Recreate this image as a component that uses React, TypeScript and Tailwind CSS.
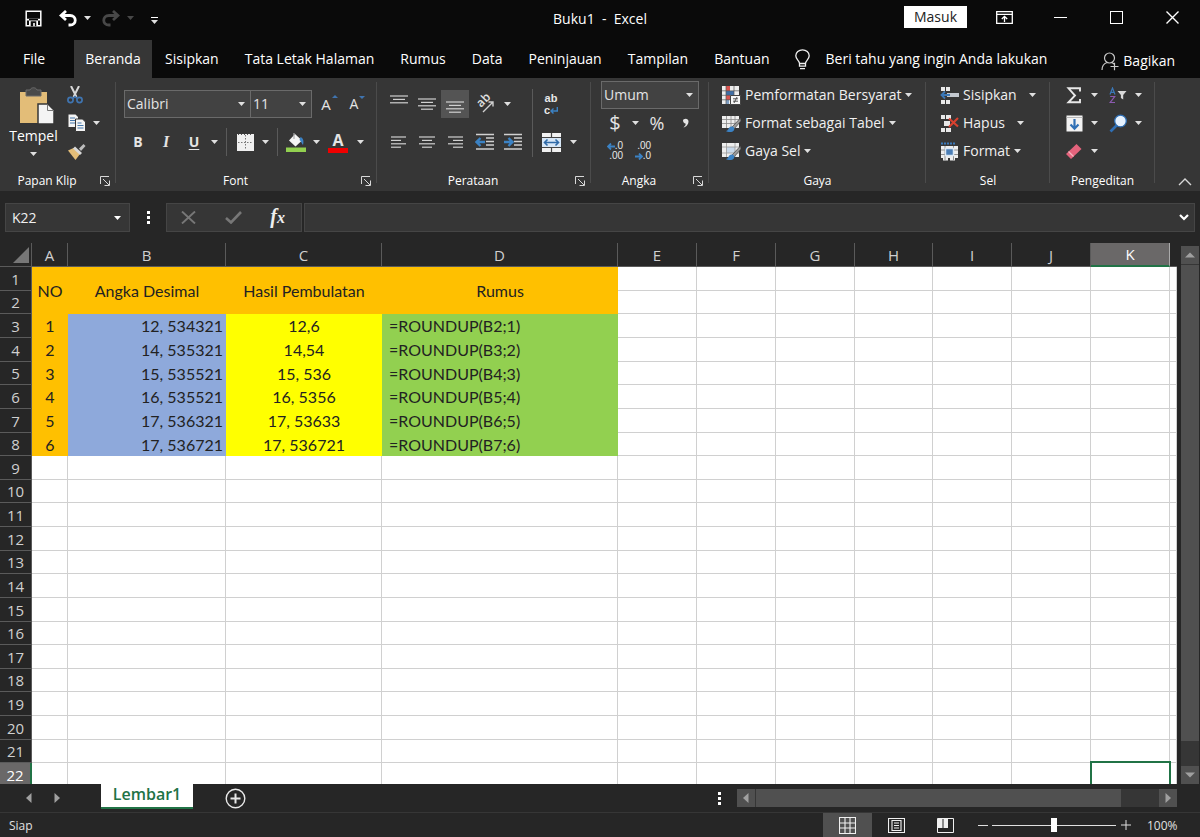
import { useState } from "react";
import type { ReactNode } from "react";

const TABS = ["Sisipkan", "Tata Letak Halaman", "Rumus", "Data", "Peninjauan", "Tampilan", "Bantuan"];

const COLUMNS = [
  { id: "A", width: "w-[36px]" },
  { id: "B", width: "w-[158px]" },
  { id: "C", width: "w-[156px]" },
  { id: "D", width: "w-[236px]" },
  { id: "E", width: "w-[79px]" },
  { id: "F", width: "w-[79px]" },
  { id: "G", width: "w-[79px]" },
  { id: "H", width: "w-[78px]" },
  { id: "I", width: "w-[79px]" },
  { id: "J", width: "w-[79px]" },
  { id: "K", width: "w-[79px]" },
];

const DATA = [
  ["1", "12, 534321", "12,6", "=ROUNDUP(B2;1)"],
  ["2", "14, 535321", "14,54", "=ROUNDUP(B3;2)"],
  ["3", "15, 535521", "15, 536", "=ROUNDUP(B4;3)"],
  ["4", "16, 535521", "16, 5356", "=ROUNDUP(B5;4)"],
  ["5", "17, 536321", "17, 53633", "=ROUNDUP(B6;5)"],
  ["6", "17, 536721", "17, 536721", "=ROUNDUP(B7;6)"],
];

const ROW_COUNT = 22;
const EMPTY_COLUMNS = ["E", "F", "G", "H", "I", "J", "K", ""];

/* ── Small shared pieces ── */

function Caret({ className = "text-[#e0e0e0]" }: { className?: string }) {
  return (
    <svg width="7" height="4" viewBox="0 0 7 4" className={`shrink-0 ${className}`} aria-hidden="true">
      <path d="M0 0h7L3.5 4z" fill="currentColor" />
    </svg>
  );
}

interface ToolProps {
  label: string;
  className?: string;
  children: ReactNode;
}

function Tool({ label, className = "w-7", children }: ToolProps) {
  return (
    <button type="button" aria-label={label} className={`flex h-7 shrink-0 items-center justify-center hover:bg-[#505050] ${className}`}>
      {children}
    </button>
  );
}

function Separator({ className = "" }: { className?: string }) {
  return <span className={`w-px shrink-0 bg-[#5a5a5a] ${className}`} />;
}

interface GroupProps {
  title: string;
  className: string;
  launcher?: boolean;
  children: ReactNode;
}

function Group({ title, className, launcher = false, children }: GroupProps) {
  return (
    <section className={`relative flex shrink-0 flex-col ${className}`}>
      <div className="h-[93px]">{children}</div>
      <div className="flex h-5 items-center">
        <h2 className="flex-1 text-center text-xs text-white">{title}</h2>
        {launcher && (
          <button type="button" aria-label={`Pengaturan ${title}`} className="flex w-[22px] justify-center">
            <svg width="10" height="10" viewBox="0 0 10 10" fill="none" stroke="#d8d8d8" aria-hidden="true">
              <path d="M.5 8V.5H9M3 3l6 6M9.5 4.5v5h-5" />
            </svg>
          </button>
        )}
      </div>
      <Separator className="absolute right-0 top-1 bottom-2 opacity-60" />
    </section>
  );
}

interface PickerProps {
  label: string;
  value: string;
  className: string;
}

function Picker({ label, value, className }: PickerProps) {
  return (
    <div className={`relative h-7 border border-[#6a6a6a] bg-[#424242] ${className}`}>
      <select aria-label={label} defaultValue={value} className="h-full w-full appearance-none pl-[2px] text-sm text-[#e4e4e4] outline-none">
        <option>{value}</option>
      </select>
      <span className="pointer-events-none absolute right-[5px] top-[11px]">
        <Caret />
      </span>
    </div>
  );
}

/* ── Alignment glyphs ── */

function Lines({ rows, y = 0 }: { rows: [number, number][]; y?: number }) {
  return (
    <svg width="20" height="20" viewBox="0 0 20 20" stroke="#d0d0d0" strokeWidth="1.2" aria-hidden="true">
      {rows.map(([from, to], i) => (
        <path key={i} d={`M${from} ${y + i * 3.4}H${to}`} />
      ))}
    </svg>
  );
}

function IndentIcon({ right = false }: { right?: boolean }) {
  return (
    <svg width="20" height="18" viewBox="0 0 20 18" fill="none" aria-hidden="true">
      <path d="M1 1.5h18M11 5h8M11 8.5h8M11 12h8M1 16h18" stroke="#d0d0d0" strokeWidth="1.3" />
      <path d={right ? "M1 9h8M5.5 5l4 4-4 4" : "M10 9H2M5.5 5l-4 4 4 4"} stroke="#3b82c4" strokeWidth="2.4" />
    </svg>
  );
}

/* ── Title bar ── */

function TitleBar() {
  return (
    <div className="flex h-10 items-start">
      <div className="flex h-9 flex-1 items-center">
        <button type="button" aria-label="Simpan" className="ml-[25px]">
          <svg width="17" height="17" viewBox="0 0 17 17" fill="none" aria-hidden="true">
            <path d="M1.2 1.2h14.6v14.6H1.2z" stroke="#fff" strokeWidth="1.5" />
            <path d="M1.5 8.8h14v1.6h-14zM4 9v7h9V9z" fill="#fff" />
            <path d="M5.7 11.3h5.6v5H9.8v-3.2H8.2v3.2H5.7z" fill="#0a0a0a" />
          </svg>
        </button>
        <button type="button" aria-label="Urungkan" className="ml-[17px] flex items-center gap-[7px]">
          <svg width="18" height="17" viewBox="0 0 18 17" fill="none" stroke="#fff" strokeWidth="2.8" aria-hidden="true">
            <path d="M7 1L2 5.5 7 10M2.5 5.5H11c7 0 7 9.5 0 9.5H9.5" />
          </svg>
          <Caret />
        </button>
        <button type="button" aria-label="Ulangi" className="ml-[11px] flex items-center gap-[7px]">
          <svg width="18" height="17" viewBox="0 0 18 17" fill="none" stroke="#484848" strokeWidth="2.8" aria-hidden="true">
            <path d="M11 1l5 4.5-5 4.5M15.5 5.5H7c-7 0-7 9.5 0 9.5h1.5" />
          </svg>
          <Caret className="text-[#484848]" />
        </button>
        <button type="button" aria-label="Kustomisasi Bilah Alat" className="ml-[17px] flex flex-col gap-[2px] pt-1">
          <span className="h-px w-[7px] bg-white" />
          <Caret />
        </button>
      </div>
      <h1 className="flex h-[37px] items-center whitespace-pre text-sm text-white">Buku1  -  Excel</h1>
      <div className="flex flex-1 justify-end">
        <button type="button" className="mt-[6px] mr-[9px] h-[22px] w-[63px] bg-white text-sm leading-[22px] text-[#222]">
          Masuk
        </button>
        <button type="button" aria-label="Opsi Tampilan Pita" className="flex h-[34px] w-14 items-center justify-center">
          <svg width="17" height="13" viewBox="0 0 17 13" fill="none" stroke="#fff" strokeWidth="1.3" aria-hidden="true">
            <path d="M.7.7h15.6v11.6H.7zM.7 3.3h15.6M8.5 11V5.5M5.8 8l2.7-2.7L11.2 8" />
          </svg>
        </button>
        <button type="button" aria-label="Minimalkan" className="flex h-[34px] w-14 items-center justify-center">
          <span className="h-px w-[13px] bg-white" />
        </button>
        <button type="button" aria-label="Maksimalkan" className="flex h-[34px] w-14 items-center justify-center">
          <span className="size-[13px] border border-white" />
        </button>
        <button type="button" aria-label="Tutup" className="flex h-[34px] w-14 items-center justify-center">
          <svg width="13" height="13" viewBox="0 0 13 13" stroke="#fff" strokeWidth="1.4" aria-hidden="true">
            <path d="M.5.5l12 12M12.5.5l-12 12" />
          </svg>
        </button>
      </div>
    </div>
  );
}

function TabBar() {
  return (
    <nav className="flex h-[38px] items-stretch text-sm text-white">
      <a href="#file" className="flex w-[74px] items-center pl-[23px]">File</a>
      <a href="#beranda" className="flex w-[78px] items-center justify-center bg-[#363636]">Beranda</a>
      {TABS.map((tab) => (
        <a key={tab} href={`#${tab}`} className="flex items-center px-[13px] whitespace-nowrap">
          {tab}
        </a>
      ))}
      <button type="button" className="ml-3 flex items-center gap-4 whitespace-nowrap">
        <svg width="15" height="21" viewBox="0 0 15 21" fill="none" stroke="#f0f0f0" strokeWidth="1.3" aria-hidden="true">
          <path d="M4.5 14.5c0-3-3.7-4-3.7-7.7a6.7 6 0 0 1 13.4 0c0 3.7-3.7 4.7-3.7 7.7zM4.5 14.5v2.7h6v-2.7M5 19.7h5" />
        </svg>
        Beri tahu yang ingin Anda lakukan
      </button>
      <button type="button" className="ml-auto mr-[25px] flex items-center gap-1 pt-1">
        <svg width="18" height="19" viewBox="0 0 18 19" fill="none" stroke="#c8c8c8" strokeWidth="1.2" aria-hidden="true">
          <circle cx="8.5" cy="6" r="5" />
          <path d="M1 18c0-4 2-6.500 5-7.500M11 10.500l2 1.500M9.500 14.500h8M13.500 10.800v7.500" />
        </svg>
        Bagikan
      </button>
    </nav>
  );
}

/* ── Ribbon groups ── */

function ClipboardGroup() {
  return (
    <Group title="Papan Klip" className="w-[116px]" launcher>
      <div className="flex pt-[3px]">
        <button type="button" className="flex w-[67px] flex-col items-center pt-[6px] text-sm text-white">
          <svg width="36" height="39" viewBox="0 0 36 39" className="ml-[6px]" aria-hidden="true">
            <path d="M1 5h27v31H1z" fill="#e3bd78" />
            <path d="M7 3h4c1-3 6-3 7 0h4v6H7z" fill="#4a4a4a" stroke="#6b6b6b" />
            <path d="M19 17h10l6 6v14H19z" fill="#f4f4f4" stroke="#363636" strokeWidth="1.5" />
            <path d="M28.5 17.5v6H35" fill="none" stroke="#777" />
          </svg>
          <span className="leading-5">Tempel</span>
          <span className="flex h-4 items-center"><Caret /></span>
        </button>
        <div className="flex flex-col">
          <Tool label="Potong" className="w-4">
            <svg width="16" height="18" viewBox="0 0 16 18" fill="none" aria-hidden="true">
              <path d="M4 0l5.500 11M12 0L6.500 11" stroke="#d8d8d8" strokeWidth="2" />
              <circle cx="3.5" cy="14" r="2.6" stroke="#3f74b0" strokeWidth="1.7" />
              <circle cx="12.5" cy="14" r="2.6" stroke="#3f74b0" strokeWidth="1.7" />
              <path d="M6 12.5l2-2 2 2" stroke="#3f74b0" strokeWidth="1.5" />
            </svg>
          </Tool>
          <div className="flex items-center gap-[6px]">
            <Tool label="Salin" className="w-5">
              <svg width="18" height="18" viewBox="0 0 18 18" aria-hidden="true">
                <path d="M.5.5h7L10 3v10H.5z" fill="#f4f4f4" />
                <path d="M2 4h5M2 6.500h6M2 9h6" stroke="#4377ad" />
                <path d="M7.500 5h7l3 3v9.500h-10z" fill="#f4f4f4" stroke="#363636" />
                <path d="M9.500 9h4M9.500 11.500h6M9.500 14h6" stroke="#4377ad" />
              </svg>
            </Tool>
            <Caret />
          </div>
          <Tool label="Pewarna Format" className="w-5">
            <svg width="18" height="17" viewBox="0 0 18 17" aria-hidden="true">
              <path d="M0 7.500l5.500-2.500 6.500 6-4.500 6z" fill="#e3bd78" />
              <path d="M7 3.500l7 6.500-2 2-7-6.500z" fill="#d8d8d8" />
              <path d="M11 5.500L15.500 1 17.500 3 13 8z" fill="#bdbdbd" />
            </svg>
          </Tool>
        </div>
      </div>
    </Group>
  );
}

function FontGroup() {
  return (
    <Group title="Font" className="w-[261px]" launcher>
      <div className="flex flex-col gap-[10px] pt-3 pl-2 text-[#e4e4e4]">
        <div className="flex">
          <Picker label="Font" value="Calibri" className="w-[127px]" />
          <Picker label="Ukuran Font" value="11" className="w-[61px] border-l-0" />
          <Tool label="Perbesar Ukuran Font" className="w-8">
            <span className="relative pr-1 text-[15px]">
              A
              <svg width="6" height="3" viewBox="0 0 6 3" className="absolute -right-[3px] top-[2px]" aria-hidden="true">
                <path d="M0 3l3-3 3 3z" fill="#3f74b0" />
              </svg>
            </span>
          </Tool>
          <Tool label="Perkecil Ukuran Font" className="w-6">
            <span className="relative pr-1 text-sm">
              A
              <svg width="6" height="3" viewBox="0 0 6 3" className="absolute -right-[3px] top-[2px]" aria-hidden="true">
                <path d="M0 0h6L3 3z" fill="#3f74b0" />
              </svg>
            </span>
          </Tool>
        </div>
        <div className="flex items-center">
          <Tool label="Tebal"><b className="text-sm">B</b></Tool>
          <Tool label="Miring"><b className="font-['Liberation_Serif',serif] text-base italic">I</b></Tool>
          <Tool label="Garis Bawah"><b className="text-sm underline underline-offset-2">U</b></Tool>
          <Tool label="Jenis Garis Bawah" className="w-3"><Caret /></Tool>
          <Separator className="ml-[6px] h-7" />
          <Tool label="Batas" className="ml-1 w-7">
            <svg width="17" height="17" viewBox="0 0 17 17" aria-hidden="true">
              <path d="M0 0h17v17H0z" fill="#f0f0f0" />
              <path d="M8.5 1v15M1 8.5h15" stroke="#777" strokeDasharray="1.5 1.5" />
              <path d="M1 .5h15" stroke="#555" strokeDasharray="1 2" />
            </svg>
          </Tool>
          <Tool label="Pilihan Batas" className="w-3"><Caret /></Tool>
          <Separator className="ml-[6px] h-7" />
          <Tool label="Warna Isian" className="ml-1 w-7">
            <svg width="20" height="20" viewBox="0 0 20 20" aria-hidden="true">
              <path d="M9 2l7 6.500-6.500 6L3 8.500z" fill="#f4f4f4" />
              <path d="M8 1v6" stroke="#aaa" strokeWidth="1.2" />
              <path d="M14.5 5c3 1 3.500 4.500 2.500 8-1-1-2-4-3.500-5z" fill="#3b82c4" />
              <path d="M0 15.5h20V20H0z" fill="#92d050" />
            </svg>
          </Tool>
          <Tool label="Pilihan Warna Isian" className="w-3"><Caret /></Tool>
          <Tool label="Warna Font" className="w-8">
            <span className="flex flex-col items-center">
              <b className="text-base leading-4">A</b>
              <span className="h-[5px] w-5 bg-[#f00000]" />
            </span>
          </Tool>
          <Tool label="Pilihan Warna Font" className="w-3"><Caret /></Tool>
        </div>
      </div>
    </Group>
  );
}

function AlignmentGroup() {
  return (
    <Group title="Perataan" className="w-[214px]" launcher>
      <div className="flex pl-2">
        <div className="flex w-[147px] flex-col gap-[10px] pt-3">
          <div className="flex items-center">
            <Tool label="Rata Atas"><Lines rows={[[1, 19], [4, 16], [1, 19]]} y={2} /></Tool>
            <Tool label="Rata Tengah"><Lines rows={[[1, 19], [4, 16], [1, 19], [4, 16]]} y={5} /></Tool>
            <Tool label="Rata Bawah" className="w-7 bg-[#545454]"><Lines rows={[[1, 19], [4, 16], [1, 19], [4, 16]]} y={8} /></Tool>
            <Tool label="Orientasi" className="w-8">
              <svg width="26" height="26" viewBox="0 0 26 26" aria-hidden="true">
                <text x="9" y="17" fontSize="12" fontWeight="600" fill="#e0e0e0" transform="rotate(-45 9 17)">ab</text>
                <path d="M11 21L21 11M21 15.500V11h-4.500" fill="none" stroke="#d0d0d0" strokeWidth="1.4" />
              </svg>
            </Tool>
            <Tool label="Pilihan Orientasi" className="w-3"><Caret /></Tool>
          </div>
          <div className="flex items-center">
            <Tool label="Rata Kiri"><Lines rows={[[2, 17], [2, 12], [2, 17], [2, 12]]} y={5} /></Tool>
            <Tool label="Tengah"><Lines rows={[[2, 18], [5, 15], [2, 18], [5, 15]]} y={5} /></Tool>
            <Tool label="Rata Kanan"><Lines rows={[[3, 18], [8, 18], [3, 18], [8, 18]]} y={5} /></Tool>
            <Tool label="Kurangi Inden" className="w-8"><IndentIcon /></Tool>
            <Tool label="Tambah Inden" className="w-6"><IndentIcon right /></Tool>
          </div>
        </div>
        <Separator className="mt-[11px] h-[68px]" />
        <div className="flex flex-col gap-[10px] pt-3 pl-1">
          <Tool label="Bungkus Teks" className="w-7">
            <span className="flex flex-col font-['Liberation_Sans',sans-serif] text-[11px] leading-3 font-bold text-[#e8e8e8]">
              ab
              <span className="flex items-center">
                c
                <svg width="8" height="7" viewBox="0 0 8 7" fill="none" stroke="#3b82c4" strokeWidth="1.4" aria-hidden="true">
                  <path d="M7.300 0v4H1M3.500 1.500L1 4l2.500 2.500" />
                </svg>
              </span>
            </span>
          </Tool>
          <div className="flex items-center">
            <Tool label="Gabungkan" className="w-7">
              <svg width="19" height="19" viewBox="0 0 19 19" aria-hidden="true">
                <path d="M0 0h19v19H0z" fill="#f2f2f2" />
                <path d="M0 4.500h19M0 14.500h19M9.500 0v4.500M9.500 14.500V19" stroke="#444" strokeWidth="1.2" />
                <path d="M0 5h19v9H0z" fill="#d7e7f7" />
                <path d="M2.500 9.500h14M5.500 6.500l-3 3 3 3M13.500 6.500l3 3-3 3" fill="none" stroke="#2f6aa8" strokeWidth="1.6" />
              </svg>
            </Tool>
            <Tool label="Pilihan Gabungkan" className="w-4"><Caret /></Tool>
          </div>
        </div>
      </div>
    </Group>
  );
}

function DecimalIcon({ decrease = false }: { decrease?: boolean }) {
  const arrow = (
    <svg width="8" height="7" viewBox="0 0 8 7" fill="none" stroke="#3b82c4" strokeWidth="1.8" aria-hidden="true">
      <path d={decrease ? "M0 3.500h7M4 .5l3 3-3 3" : "M8 3.500H1M4 .5l-3 3 3 3"} />
    </svg>
  );
  return (
    <span className="flex flex-col items-end font-['Liberation_Sans',sans-serif] text-[10px] leading-[10px] text-[#e8e8e8]">
      <span className="flex items-center">{decrease ? ".00" : <>{arrow}.0</>}</span>
      <span className="flex items-center">{decrease ? <>{arrow}.0</> : ".00"}</span>
    </span>
  );
}

function NumberGroup() {
  return (
    <Group title="Angka" className="w-[118px]" launcher>
      <div className="flex flex-col pt-[3px] pl-[10px] text-[#e4e4e4]">
        <Picker label="Format Angka" value="Umum" className="w-[98px]" />
        <div className="flex items-center">
          <Tool label="Format Akuntansi"><span className="text-xl">$</span></Tool>
          <Tool label="Pilihan Akuntansi" className="w-3"><Caret /></Tool>
          <Tool label="Gaya Persen" className="w-8"><span className="text-lg">%</span></Tool>
          <Tool label="Gaya Koma" className="w-6">
            <svg width="7" height="10" viewBox="0 0 7 10" aria-hidden="true">
              <path d="M1 2.500C1 .5 6.500-.5 6.500 3.500 6.500 6.500 4 9 1.500 9.500 3 8 4 7 3.500 5.500 2 5.500 1 4 1 2.500z" fill="#e4e4e4" />
            </svg>
          </Tool>
        </div>
        <div className="flex items-center">
          <Tool label="Tambah Desimal"><DecimalIcon /></Tool>
          <Tool label="Kurangi Desimal"><DecimalIcon decrease /></Tool>
        </div>
      </div>
    </Group>
  );
}

function TextTool({ icon, label, gap = "gap-1" }: { icon: ReactNode; label: string; gap?: string }) {
  return (
    <button type="button" className="flex h-7 items-center gap-1 whitespace-nowrap text-sm text-[#f0f0f0]">
      {icon}
      <span className={`flex items-center ${gap}`}>
        {label}
        <Caret />
      </span>
    </button>
  );
}

function StylesGroup() {
  return (
    <Group title="Gaya" className="w-[217px]">
      <div className="flex flex-col items-start pt-[3px] pl-[13px]">
        <TextTool
          label="Pemformatan Bersyarat"
          icon={
            <svg width="19" height="19" viewBox="0 0 19 19" aria-hidden="true">
              <path d="M0 0h17v18H0z" fill="#eee" />
              <path d="M4 0h4v5H4z" fill="#d9534f" />
              <path d="M4 5h8v4H4z" fill="#3f6ea5" />
              <path d="M4 9h4v5H4z" fill="#d9534f" />
              <path d="M4 14h3v4H4z" fill="#7f9fc4" />
              <path d="M0 4.800h17M0 9.300h9M0 13.800h9M4 0v18M12 0v9" stroke="#555" strokeWidth=".7" />
              <path d="M8.500 9.500h10v9h-10z" fill="#f6f6f6" stroke="#444" />
              <path d="M11 12.800h5M11 15.200h5M15 11l-3 6" stroke="#444" strokeWidth=".9" />
            </svg>
          }
        />
        <TextTool
          label="Format sebagai Tabel"
          icon={
            <svg width="19" height="19" viewBox="0 0 19 19" aria-hidden="true">
              <path d="M0 2h17v12H0z" fill="#eee" />
              <path d="M0 5.500h17M0 9.500h17M4.500 2v12M9 2v12M13 2v12" stroke="#888" strokeWidth=".8" />
              <path d="M18.500 4L10 13l2 2 7-8z" fill="#9a9a9a" stroke="#444" strokeWidth=".7" />
              <path d="M4 17c3 0 2-5 6-4.500 3.500.5 3 5-1 5.500-2 .2-4 0-5-1z" fill="#3b82c4" />
            </svg>
          }
        />
        <TextTool
          label="Gaya Sel"
          icon={
            <svg width="19" height="19" viewBox="0 0 19 19" aria-hidden="true">
              <path d="M0 1h17v14H0z" fill="#eee" />
              <path d="M4.500 5h8.500v6H4.500z" fill="#c9d9ea" />
              <path d="M0 5h17M0 11h17M4.500 1v14M13 1v14" stroke="#999" strokeWidth=".8" />
              <path d="M18.500 4L10 13l2 2 7-8z" fill="#9a9a9a" stroke="#444" strokeWidth=".7" />
              <path d="M4 17c3 0 2-5 6-4.500 3.500.5 3 5-1 5.500-2 .2-4 0-5-1z" fill="#3b82c4" />
            </svg>
          }
        />
      </div>
    </Group>
  );
}

function CellsGroup() {
  return (
    <Group title="Sel" className="w-[124px]">
      <div className="flex flex-col items-start pt-[3px] pl-[14px]">
        <TextTool
          label="Sisipkan"
          gap="gap-3"
          icon={
            <svg width="19" height="19" viewBox="0 0 19 19" aria-hidden="true">
              <path d="M1 1h4v4H1zM6 1h4v4H6zM1 14h4v4H1zM6 14h4v4H6z" fill="#e8e8e8" />
              <path d="M7 7h12v4H7z" fill="#c4c9d0" />
              <path d="M10 9H2M5 5.500L1.500 9 5 12.500" fill="none" stroke="#3b78b8" strokeWidth="1.8" />
            </svg>
          }
        />
        <TextTool
          label="Hapus"
          gap="gap-3"
          icon={
            <svg width="19" height="19" viewBox="0 0 19 19" aria-hidden="true">
              <path d="M1 1h4v4H1zM6 1h5v4H6zM1 14h4v4H1zM6 14h5v4H6zM4 7h6v5H4z" fill="#e8e8e8" />
              <path d="M9 4.500l9 8M18 4l-9 9" stroke="#d8412f" strokeWidth="2.2" />
            </svg>
          }
        />
        <TextTool
          label="Format"
          icon={
            <svg width="19" height="19" viewBox="0 0 19 19" aria-hidden="true">
              <path d="M1 1.500h15" stroke="#3b78b8" strokeWidth="2" strokeDasharray="2 1" />
              <path d="M1 4h17v12H1zM3 16h5v2.500H3zM10 16h5v2.500h-5z" fill="#eee" />
              <path d="M1 8h17M1 12.500h17M5 4v14M13.500 4v14" stroke="#777" strokeWidth=".8" />
              <path d="M5.500 6.500h8v7h-8z" fill="#4a7db5" stroke="#dce8f4" strokeWidth="1.5" />
            </svg>
          }
        />
      </div>
    </Group>
  );
}

function EditingGroup() {
  return (
    <Group title="Pengeditan" className="w-[105px]">
      <div className="flex flex-col pt-[3px] pl-[10px]">
        <div className="flex items-center">
          <Tool label="Jumlah Otomatis">
            <svg width="16" height="17" viewBox="0 0 16 17" fill="none" stroke="#e8e8e8" strokeWidth="1.9" aria-hidden="true">
              <path d="M14 4.500V1.300H2.500L9 8.500l-6.500 6.800H14v-3.200" />
            </svg>
          </Tool>
          <Tool label="Pilihan Jumlah" className="w-3"><Caret /></Tool>
          <Tool label="Urutkan dan Filter" className="ml-1 w-7">
            <svg width="18" height="17" viewBox="0 0 18 17" fill="none" aria-hidden="true">
              <path d="M1 7.500L3.500 1 6 7.500M2 5.300h3" stroke="#3b78b8" strokeWidth="1.2" />
              <path d="M1.200 9.500h4.500L1.200 15.500h4.800" stroke="#8c5ab0" strokeWidth="1.2" />
              <path d="M8.500 4h9l-3.300 4v4.500l-2.300-1.500V8z" fill="#d8d8d8" />
            </svg>
          </Tool>
          <Tool label="Pilihan Urutkan" className="w-3"><Caret /></Tool>
        </div>
        <div className="flex items-center">
          <Tool label="Isi">
            <svg width="17" height="17" viewBox="0 0 17 17" aria-hidden="true">
              <path d="M.5.5h16v16H.5z" fill="#f2f2f2" />
              <path d="M.5 2.500h16" stroke="#b8b8b8" />
              <path d="M8.500 4v9.500M4.500 9.500l4 4.200 4-4.200" fill="none" stroke="#2f6fb5" strokeWidth="2.2" />
            </svg>
          </Tool>
          <Tool label="Pilihan Isi" className="w-3"><Caret /></Tool>
          <Tool label="Temukan dan Pilih" className="ml-1 w-7">
            <svg width="19" height="19" viewBox="0 0 19 19" aria-hidden="true">
              <path d="M1.500 17.500L8 11" stroke="#2f6fb5" strokeWidth="2.6" />
              <circle cx="11.5" cy="7" r="5.8" fill="#e6f2ff" stroke="#2f6fb5" strokeWidth="1.3" />
            </svg>
          </Tool>
          <Tool label="Pilihan Temukan" className="w-3"><Caret /></Tool>
        </div>
        <div className="flex items-center">
          <Tool label="Hapus Isi">
            <svg width="18" height="17" viewBox="0 0 18 17" aria-hidden="true">
              <path d="M1 11L11.500 1l5 5L6 16z" fill="#e4637c" />
              <path d="M3.500 8.500l5 5" stroke="#f5b5c0" strokeWidth="1.3" />
            </svg>
          </Tool>
          <Tool label="Pilihan Hapus" className="w-3"><Caret /></Tool>
        </div>
      </div>
    </Group>
  );
}

function Ribbon() {
  return (
    <div className="flex h-[113px] bg-[#363636]">
      <ClipboardGroup />
      <FontGroup />
      <AlignmentGroup />
      <NumberGroup />
      <StylesGroup />
      <CellsGroup />
      <EditingGroup />
      <button type="button" aria-label="Ciutkan Pita" className="mt-auto mr-2 mb-[5px] ml-auto">
        <svg width="14" height="8" viewBox="0 0 14 8" fill="none" stroke="#d8d8d8" strokeWidth="1.4" aria-hidden="true">
          <path d="M1 7l6-6 6 6" />
        </svg>
      </button>
    </div>
  );
}

function Dots() {
  return (
    <span className="flex flex-col gap-[2px]">
      <span className="size-[3px] bg-white" />
      <span className="size-[3px] bg-white" />
      <span className="size-[3px] bg-white" />
    </span>
  );
}

function FormulaBar() {
  const [formula, setFormula] = useState("");

  return (
    <div className="flex items-stretch px-[5px] pt-3 pb-[11px]">
      <div className="relative h-[29px] w-[125px] border border-[#454545] bg-[#363636]">
        <input aria-label="Kotak Nama" defaultValue="K22" className="h-full w-full pl-[6px] text-sm text-[#f0f0f0] outline-none" />
        <span className="pointer-events-none absolute right-2 top-3"><Caret className="text-white" /></span>
      </div>
      <div className="flex w-9 items-center justify-center"><Dots /></div>
      <div className="flex w-[136px] items-center justify-between border border-[#454545] bg-[#363636] pr-4 pl-[14px]">
        <button type="button" aria-label="Batal">
          <svg width="15" height="13" viewBox="0 0 15 13" stroke="#777" strokeWidth="1.9" aria-hidden="true">
            <path d="M1 .5l13 12M14 .5l-13 12" />
          </svg>
        </button>
        <button type="button" aria-label="Masukkan">
          <svg width="17" height="13" viewBox="0 0 17 13" fill="none" stroke="#777" strokeWidth="2.6" aria-hidden="true">
            <path d="M1 7l5 4.500L16 1" />
          </svg>
        </button>
        <button type="button" aria-label="Sisipkan Fungsi" className="font-['Liberation_Serif',serif] text-xl leading-5 font-bold text-[#eee] italic">
          f<span className="text-base">x</span>
        </button>
      </div>
      <div className="ml-[2px] flex flex-1 items-center border border-[#454545] bg-[#363636] pr-[5px]">
        <input aria-label="Bilah Rumus" value={formula} onChange={(e) => setFormula(e.target.value)} className="h-full flex-1 px-2 text-sm text-white outline-none" />
        <button type="button" aria-label="Perluas Bilah Rumus">
          <svg width="10" height="7" viewBox="0 0 10 7" fill="none" stroke="#fff" strokeWidth="2.2" aria-hidden="true">
            <path d="M1 1l4 4 4-4" />
          </svg>
        </button>
      </div>
    </div>
  );
}

/* ── Sheet ── */

function SheetRow({ row }: { row: number }) {
  const selected = row === ROW_COUNT;
  const data = row >= 3 && row <= 8 ? DATA[row - 3] : null;
  // row pitch is a little under 24px, so three rows in eight are shorter
  const short = [1, 4, 7].includes((row - 1) % 8);
  const blank = "border-r border-b border-[#d0d0d0] p-0";

  return (
    <tr className={short ? "h-[23px]" : "h-6"}>
      <th
        scope="row"
        className={
          selected
            ? "border-r-2 border-[#217346] bg-[#6a6868] p-0 font-normal text-white"
            : "border-r border-b border-[#5a5a5a] bg-[#262626] p-0 font-normal text-[#d0d0d0]"
        }
      >
        {row}
      </th>
      {row === 1 && (
        <>
          <td rowSpan={2} className="bg-[#ffc000] p-0 text-center">NO</td>
          <td rowSpan={2} className="bg-[#ffc000] p-0 text-center">Angka Desimal</td>
          <td rowSpan={2} className="bg-[#ffc000] p-0 text-center">Hasil Pembulatan</td>
          <td rowSpan={2} className="bg-[#ffc000] p-0 text-center">Rumus</td>
        </>
      )}
      {data && (
        <>
          <td className="bg-[#ffc000] p-0 text-center">{data[0]}</td>
          <td className="bg-[#8ea9db] py-0 pr-[3px] pl-0 text-right">{data[1]}</td>
          <td className="bg-[#ffff00] p-0 text-center">{data[2]}</td>
          <td className="bg-[#92d050] py-0 pr-0 pl-[7px]">{data[3]}</td>
        </>
      )}
      {row > 8 && ["A", "B", "C", "D"].map((id) => <td key={id} className={blank} />)}
      {EMPTY_COLUMNS.map((id) =>
        selected && id === "K" ? (
          <td key={id} className="relative p-0">
            <span className="absolute -inset-x-px -top-[2px] bottom-0 border-2 border-b-0 border-[#217346]" />
          </td>
        ) : (
          <td key={id} className={blank} />
        )
      )}
    </tr>
  );
}

function Sheet() {
  return (
    <div className="min-w-0 flex-1 overflow-hidden">
      <table className="h-full w-full table-fixed border-separate border-spacing-0 bg-white font-[Lato,'Open_Sans',sans-serif] text-base leading-5 text-[#222]">
        <colgroup>
          <col className="w-8" />
          {COLUMNS.map((col) => <col key={col.id} className={col.width} />)}
          <col />
        </colgroup>
        <thead>
          <tr className="h-6 bg-[#262626] font-['Open_Sans',sans-serif] text-[15px] text-[#d0d0d0]">
            <th className="border-r border-b border-[#5a5a5a] p-0" aria-label="Pilih Semua">
              <svg width="16" height="16" viewBox="0 0 16 16" className="ml-[13px]" aria-hidden="true">
                <path d="M16 0v16H0z" fill="#777" />
              </svg>
            </th>
            {COLUMNS.map((col) => (
              <th
                key={col.id}
                scope="col"
                className={
                  col.id === "K"
                    ? "border-r border-b-2 border-r-[#aaa] border-b-[#217346] bg-[#6a6868] p-0 font-normal text-white"
                    : "border-r border-b border-[#5a5a5a] p-0 font-normal"
                }
              >
                {col.id}
              </th>
            ))}
            <th className="border-b border-[#5a5a5a] p-0" />
          </tr>
        </thead>
        <tbody className="[&_th]:font-['Open_Sans',sans-serif] [&_th]:text-[15px]">
          {Array.from({ length: ROW_COUNT }, (_, i) => <SheetRow key={i} row={i + 1} />)}
        </tbody>
      </table>
    </div>
  );
}

function ScrollArrow({ label, path, className = "" }: { label: string; path: string; className?: string }) {
  return (
    <button type="button" aria-label={label} className={`flex size-[18px] shrink-0 items-center justify-center ${className}`}>
      <svg width="10" height="10" viewBox="0 0 10 10" aria-hidden="true">
        <path d={path} fill="#a0a0a0" />
      </svg>
    </button>
  );
}

function SheetBar() {
  return (
    <div className="flex h-7 items-start">
      <div className="flex h-7 w-[101px] items-center gap-[10px] pl-5">
        <ScrollArrow label="Lembar Sebelumnya" path="M7.500 0v10L2 5z" />
        <ScrollArrow label="Lembar Berikutnya" path="M2.500 0v10L8 5z" />
      </div>
      <button type="button" className="h-[25px] w-[92px] border-b-2 border-[#217346] bg-white pb-1 text-base leading-5 font-semibold text-[#217346]">
        Lembar1
      </button>
      <button type="button" aria-label="Lembar Baru" className="mt-1 ml-8">
        <svg width="21" height="21" viewBox="0 0 21 21" fill="none" stroke="#e8e8e8" aria-hidden="true">
          <circle cx="10.5" cy="10.5" r="9.3" strokeWidth="1.4" />
          <path d="M10.500 5.500v10M5.500 10.500h10" strokeWidth="2" />
        </svg>
      </button>
      <div className="ml-auto flex h-7 items-center gap-4 pr-[23px]">
        <Dots />
        <div className="flex w-[440px] items-center bg-[#363636]">
          <ScrollArrow label="Gulir Kiri" path="M7.500 0v10L2 5z" className="bg-[#505050]" />
          <span className="ml-px h-[18px] w-[365px] bg-[#505050]" />
          <ScrollArrow label="Gulir Kanan" path="M2.500 0v10L8 5z" className="ml-auto bg-[#505050]" />
        </div>
      </div>
    </div>
  );
}

function StatusBar() {
  const [zoom, setZoom] = useState(100);

  return (
    <footer className="flex h-[25px] items-center border-t border-[#363636] text-xs text-[#e0e0e0]">
      <span className="pt-[2px] pl-[9px]">Siap</span>
      <div className="ml-auto flex h-full">
        <button type="button" aria-label="Normal" className="flex w-[49px] items-center justify-center bg-[#505050] pt-px">
          <svg width="17" height="17" viewBox="0 0 17 17" fill="none" stroke="#f0f0f0" strokeWidth="1.1" aria-hidden="true">
            <path d="M.5.5h16v16H.5zM6 .5v16M11 .5v16M.5 6h16M.5 11h16" />
          </svg>
        </button>
        <button type="button" aria-label="Tata Letak Halaman" className="flex w-[49px] items-center justify-center pt-px">
          <svg width="17" height="15" viewBox="0 0 17 15" fill="none" stroke="#f0f0f0" strokeWidth="1.1" aria-hidden="true">
            <path d="M.5.5h16v14H.5zM4 2.500h9v10H4zM6 5h5M6 7.500h5M6 10h5" />
          </svg>
        </button>
        <button type="button" aria-label="Pratinjau Hentian Halaman" className="flex w-[49px] items-center justify-center pt-px">
          <svg width="17" height="15" viewBox="0 0 17 15" aria-hidden="true">
            <path d="M.5.5h16v14H.5z" fill="none" stroke="#f0f0f0" />
            <path d="M1 0h4.500v10H1zM6.500 0H11v10H6.500z" fill="#f0f0f0" />
          </svg>
        </button>
      </div>
      <button type="button" aria-label="Perkecil" className="ml-2 flex h-5 w-[10px] items-center">
        <span className="h-px w-full bg-[#e0e0e0]" />
      </button>
      <input
        type="range"
        aria-label="Zoom"
        min={0}
        max={200}
        value={zoom}
        onChange={(e) => setZoom(Number(e.target.value))}
        className="mx-1 h-[14px] w-[124px] appearance-none bg-[linear-gradient(#e0e0e0,#e0e0e0)] bg-[length:100%_1px] bg-center bg-no-repeat [&::-webkit-slider-thumb]:h-[14px] [&::-webkit-slider-thumb]:w-[6px] [&::-webkit-slider-thumb]:appearance-none [&::-webkit-slider-thumb]:bg-white"
      />
      <button type="button" aria-label="Perbesar" className="ml-px">
        <svg width="10" height="10" viewBox="0 0 10 10" stroke="#e0e0e0" aria-hidden="true">
          <path d="M5 0v10M0 5h10" />
        </svg>
      </button>
      <span className="w-[69px] pt-[2px] pl-4">{zoom}%</span>
    </footer>
  );
}

export default function App() {
  return (
    <div className="flex h-screen flex-col overflow-hidden bg-[#262626] font-['Open_Sans',sans-serif]">
      <header className="bg-[#0a0a0a]">
        <TitleBar />
        <TabBar />
      </header>
      <Ribbon />
      <FormulaBar />
      <main className="flex min-h-0 flex-1">
        <Sheet />
        <div className="mt-[3px] mr-px ml-1 flex w-[18px] flex-col bg-[#363636]">
          <ScrollArrow label="Gulir Atas" path="M0 7.500h10L5 2.500z" className="bg-[#505050]" />
          <span className="mt-px mb-[25px] flex-1 bg-[#505050]" />
          <ScrollArrow label="Gulir Bawah" path="M0 2.500h10L5 7.500z" className="bg-[#505050]" />
        </div>
      </main>
      <SheetBar />
      <StatusBar />
    </div>
  );
}
